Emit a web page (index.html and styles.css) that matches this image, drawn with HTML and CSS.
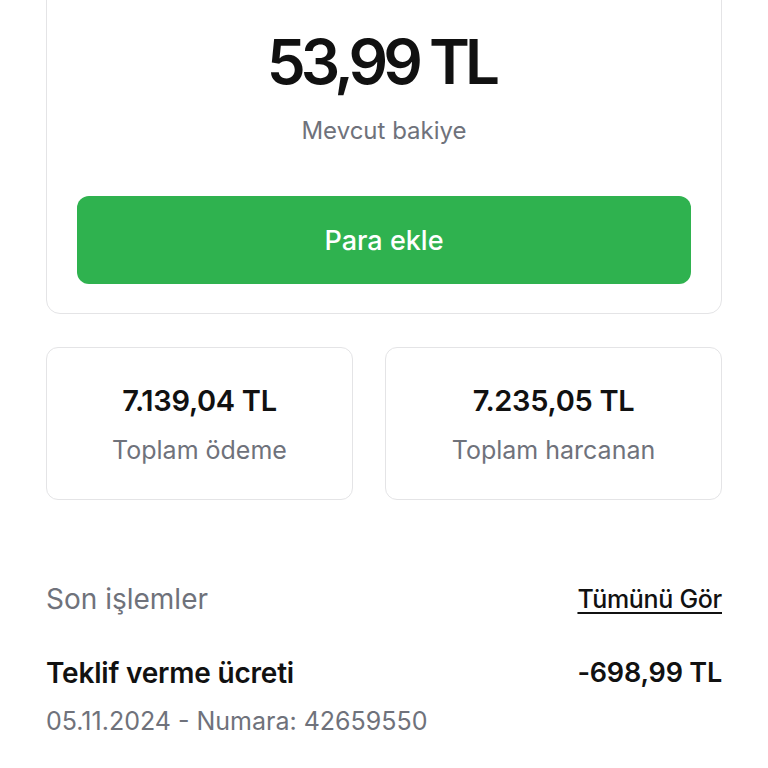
FILE: index.html
```html
<!DOCTYPE html>
<html lang="tr">
<head>
<meta charset="utf-8">
<title>Cüzdan</title>
<link rel="stylesheet" href="styles.css">
</head>
<body>
<main class="page">
  <section class="balance-card">
    <div class="balance-amount">53,99 TL</div>
    <div class="balance-label">Mevcut bakiye</div>
    <button class="add-btn">Para ekle</button>
  </section>

  <section class="stats">
    <div class="stat-card">
      <div class="stat-value">7.139,04 TL</div>
      <div class="stat-label">Toplam ödeme</div>
    </div>
    <div class="stat-card">
      <div class="stat-value">7.235,05 TL</div>
      <div class="stat-label">Toplam harcanan</div>
    </div>
  </section>

  <section class="recent">
    <div class="recent-head">
      <span class="recent-title">Son işlemler</span>
      <a class="see-all" href="#">Tümünü Gör</a>
    </div>
    <div class="tx">
      <div class="tx-row">
        <span class="tx-title">Teklif verme ücreti</span>
        <span class="tx-amount">-698,99 TL</span>
      </div>
      <div class="tx-meta">05.11.2024 - Numara: 42659550</div>
    </div>
    <div class="tx">
      <div class="tx-row">
        <span class="tx-title">Para yükleme</span>
        <span class="tx-amount">+500,00 TL</span>
      </div>
    </div>
  </section>
</main>
</body>
</html>
```

FILE: styles.css
```css
html, body {
  margin: 0;
  padding: 0;
  background: #ffffff;
}

body {
  font-family: Inter, Roboto, "Liberation Sans", sans-serif;
  color: #111111;
  overflow: hidden;
  height: 768px;
}

.page {
  padding: 0 46px;
  margin-top: -20px;
}

.balance-card {
  border: 1.5px solid #e4e4e6;
  border-radius: 14px;
  padding: 41px 30px 29px;
  text-align: center;
}

.balance-amount {
  font-size: 62px;
  font-weight: 600;
  line-height: 80px;
  letter-spacing: -4.8px;
  padding-right: 6px;
}

.balance-label {
  margin-top: 14px;
  font-size: 24px;
  line-height: 30px;
  color: #6f727b;
}

.add-btn {
  display: block;
  width: 100%;
  height: 88px;
  margin-top: 50px;
  border: none;
  border-radius: 12px;
  background: #2fb24f;
  color: #ffffff;
  font-family: inherit;
  font-size: 27px;
  font-weight: 500;
}

.stats {
  display: grid;
  grid-template-columns: 307px 1fr;
  gap: 32px;
  margin-top: 33px;
}

.stat-card {
  border: 1.5px solid #e4e4e6;
  border-radius: 12px;
  height: 153px;
  box-sizing: border-box;
  padding-top: 36px;
  text-align: center;
}

.stat-value {
  font-size: 29px;
  font-weight: 600;
  line-height: 34px;
  letter-spacing: -0.3px;
}

.stat-label {
  margin-top: 17px;
  font-size: 25px;
  line-height: 30px;
  color: #6f727b;
}

.recent {
  margin-top: 83px;
}

.recent-head {
  display: flex;
  justify-content: space-between;
  align-items: center;
  height: 32px;
}

.recent-title {
  font-size: 28px;
  color: #6f727b;
}

.see-all {
  font-size: 25px;
  font-weight: 500;
  color: #111111;
  text-decoration: underline;
  text-underline-offset: 4px;
  letter-spacing: -0.3px;
}

.tx {
  margin-top: 42px;
}

.tx + .tx {
  margin-top: 34px;
}

.tx-row {
  display: flex;
  justify-content: space-between;
  align-items: center;
  line-height: 32px;
}

.tx-title {
  font-size: 28px;
  font-weight: 600;
  letter-spacing: -0.2px;
}

.tx-amount {
  font-size: 27px;
  font-weight: 600;
  letter-spacing: -0.2px;
}

.tx-meta {
  margin-top: 17px;
  font-size: 25px;
  line-height: 30px;
  color: #6f727b;
}
```
